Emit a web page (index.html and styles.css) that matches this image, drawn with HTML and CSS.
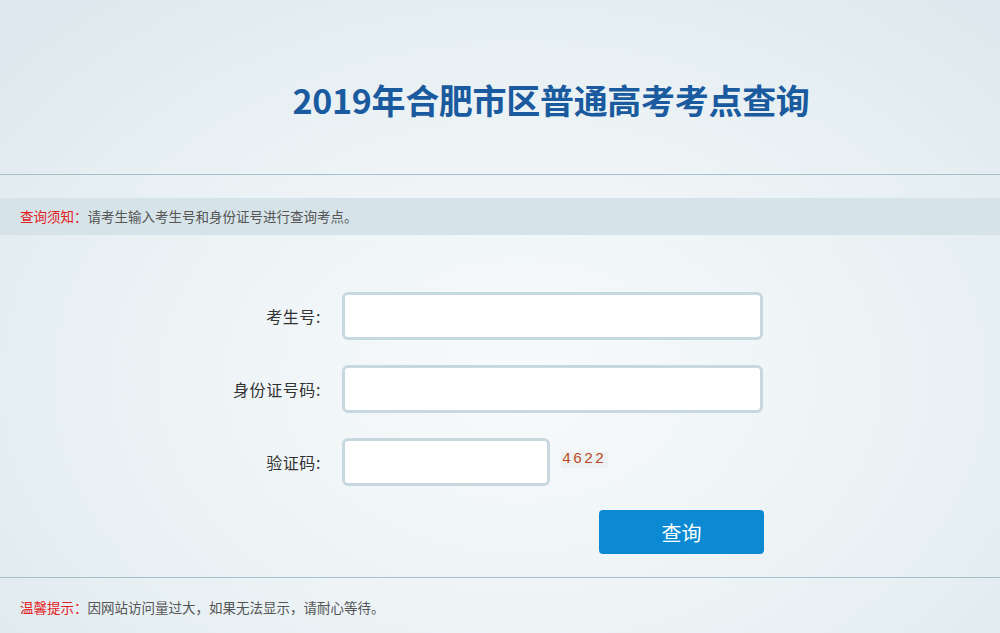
FILE: index.html
```html
<!DOCTYPE html>
<html lang="zh">
<head>
<meta charset="utf-8">
<title>2019年合肥市区普通高考考点查询</title>
<link rel="stylesheet" href="styles.css">
</head>
<body>
<div class="page">
  <header class="header">
    <h1 class="title">2019年合肥市区普通高考考点查询</h1>
  </header>
  <div class="notice"><span class="red">查询须知：</span>请考生输入考生号和身份证号进行查询考点。</div>
  <form class="form">
    <div class="row">
      <label class="label">考生号:</label>
      <input class="input" type="text">
    </div>
    <div class="row">
      <label class="label">身份证号码:</label>
      <input class="input" type="text">
    </div>
    <div class="row">
      <label class="label">验证码:</label>
      <input class="input input-short" type="text">
      <span class="captcha">4622</span>
    </div>
    <div class="row row-btn">
      <button class="btn" type="button">查询</button>
    </div>
  </form>
  <footer class="footer"><span class="red">温馨提示：</span>因网站访问量过大，如果无法显示，请耐心等待。</footer>
</div>
</body>
</html>
```
FILE: styles.css
```css
html, body {
  margin: 0;
  padding: 0;
  height: 100%;
}
body {
  font-family: "Microsoft YaHei", "Noto Sans CJK SC", sans-serif;
  background: radial-gradient(ellipse 70% 80% at 52% 60%, #f7fafb 0%, #eef4f6 45%, #dde9ee 100%);
  color: #333;
  overflow: hidden;
}
.page {
  width: 1000px;
  height: 633px;
}
.header {
  height: 174px;
  border-bottom: 1px solid #a9bfca;
  box-sizing: content-box;
  display: flex;
  justify-content: center;
}
.title {
  margin: 79px 0 0 102px;
  font-size: 34px;
  line-height: 42px;
  font-weight: bold;
  color: #1a5a9e;
  letter-spacing: -0.3px;
}
.notice {
  margin-top: 23px;
  height: 37px;
  line-height: 37px;
  background: #d6e4e9;
  padding-left: 20px;
  font-size: 13.5px;
  color: #555;
}
.red {
  color: #e1211d;
}
.form {
  margin: 57px 0 0 0;
  display: flex;
  flex-direction: column;
  gap: 25px;
}
.row {
  display: flex;
  align-items: center;
  height: 48px;
}
.label {
  width: 342px;
  text-align: right;
  padding-right: 21px;
  box-sizing: border-box;
  font-size: 16px;
  letter-spacing: 0.6px;
  color: #333;
}
.input {
  width: 421px;
  height: 48px;
  box-sizing: border-box;
  border: 3px solid #c7d8de;
  border-radius: 6px;
  background: #fff;
  outline: none;
  padding: 0 10px;
  font-size: 15px;
}
.input-short {
  width: 208px;
}
.captcha {
  margin-left: 11px;
  font-family: "Liberation Mono", "DejaVu Sans Mono", monospace;
  font-size: 15px;
  letter-spacing: 2px;
  color: #bb4a24;
  background: #eef1f1;
  padding: 0 2px 0 1px;
  line-height: 16px;
  margin-top: -4px;
}
.row-btn {
  height: 44px;
  margin-top: -1px;
  padding-left: 599px;
}
.btn {
  width: 165px;
  height: 44px;
  border: none;
  border-radius: 4px;
  background: #0b8ad3;
  color: #fff;
  font-family: "Microsoft YaHei", "Noto Sans CJK SC", sans-serif;
  font-size: 20px;
  cursor: pointer;
}
.footer {
  margin-top: 23px;
  border-top: 1px solid #a9bfca;
  padding-left: 20px;
  font-size: 13.5px;
  line-height: 58px;
  color: #555;
}
```
